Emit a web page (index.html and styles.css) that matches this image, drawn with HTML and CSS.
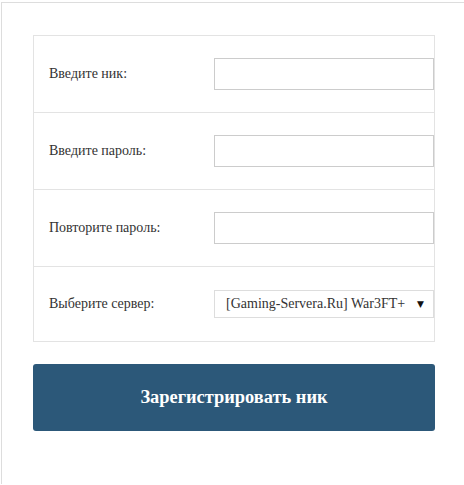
FILE: index.html
```html
<!DOCTYPE html>
<html lang="ru">
<head>
<meta charset="utf-8">
<link rel="stylesheet" href="styles.css">
</head>
<body>
<div class="page">
  <form class="reg">
    <div class="table">
      <div class="row">
        <label class="lbl">Введите ник:</label>
        <input class="field" type="text">
      </div>
      <div class="row">
        <label class="lbl">Введите пароль:</label>
        <input class="field" type="password">
      </div>
      <div class="row">
        <label class="lbl">Повторите пароль:</label>
        <input class="field" type="password">
      </div>
      <div class="row row-last">
        <label class="lbl">Выберите сервер:</label>
        <div class="select">
          <span class="sel-text">[Gaming-Servera.Ru] War3FT+</span>
          <span class="arrow">▼</span>
        </div>
      </div>
    </div>
    <button class="submit" type="button">Зарегистрировать ник</button>
  </form>
</div>
</body>
</html>
```
FILE: styles.css
```css
html, body {
  margin: 0;
  padding: 0;
  background: #fff;
}
body {
  font-family: "Liberation Serif", "Times New Roman", serif;
  color: #333;
}
.page {
  margin: 2px 0 0 1px;
  border-top: 1px solid #ddd;
  border-left: 1px solid #ddd;
  height: 482px;
  box-sizing: border-box;
  padding: 32px 0 0 31px;
}
.reg {
  width: 402px;
}
.table {
  border: 1px solid #e3e3e3;
}
.row {
  display: grid;
  grid-template-columns: 180px 220px;
  align-items: center;
  height: 76px;
  border-top: 1px solid #e3e3e3;
}
.row:first-child {
  border-top: none;
}
.row-last {
  height: 74px;
}
.lbl {
  padding-left: 15px;
  font-size: 14px;
  color: #333;
}
.field {
  box-sizing: border-box;
  width: 220px;
  height: 32px;
  margin: 0;
  border: 1px solid #ccc;
  background: #fff;
  padding: 0 6px;
}
.select {
  box-sizing: border-box;
  width: 220px;
  height: 28px;
  border: 1px solid #ddd;
  display: flex;
  align-items: center;
  justify-content: space-between;
  padding: 0 9px 0 11px;
  font-size: 14px;
  color: #333;
  white-space: nowrap;
  overflow: hidden;
}
.arrow {
  font-family: "DejaVu Sans", sans-serif;
  font-size: 9px;
  color: #111;
}
.submit {
  display: block;
  margin-top: 22px;
  width: 402px;
  height: 67px;
  border: none;
  border-radius: 3px;
  background: #2c5879;
  color: #fff;
  font-family: "Liberation Serif", "Times New Roman", serif;
  font-size: 18.4px;
  font-weight: bold;
  padding: 0;
}
```
